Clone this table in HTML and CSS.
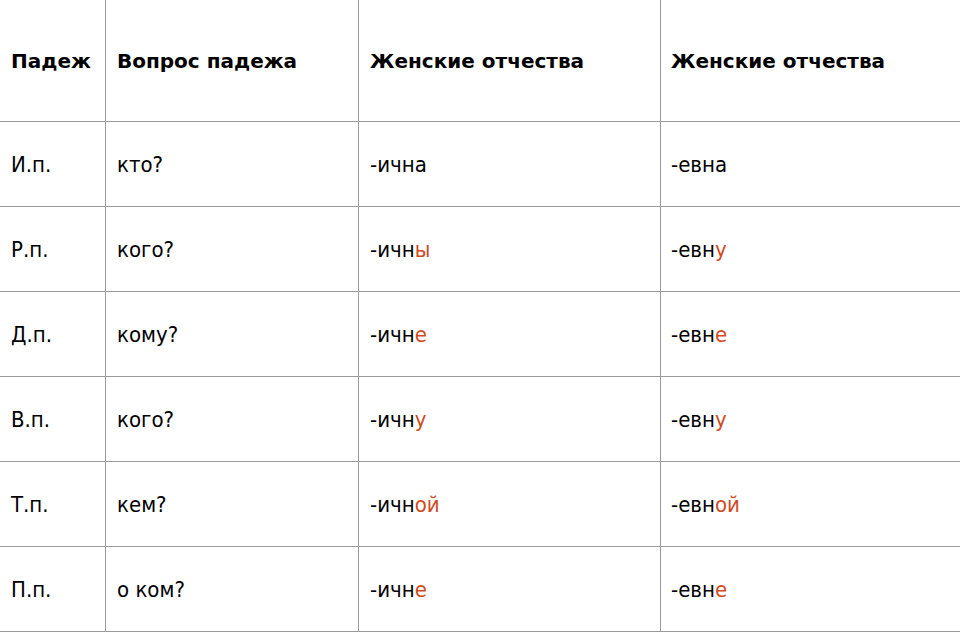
FILE: index.html
```html
<!DOCTYPE html>
<html lang="ru">
<head>
<meta charset="utf-8">
<title>Падежи отчеств</title>
<link rel="stylesheet" href="styles.css">
</head>
<body>
<table class="cases">
  <thead>
    <tr class="head-row">
      <th class="c1">Падеж</th>
      <th class="c2">Вопрос падежа</th>
      <th class="c3">Женские отчества</th>
      <th class="c4">Женские отчества</th>
    </tr>
  </thead>
  <tbody>
    <tr>
      <td class="c1">И.п.</td>
      <td class="c2">кто?</td>
      <td class="c3">-ична</td>
      <td class="c4">-евна</td>
    </tr>
    <tr>
      <td class="c1">Р.п.</td>
      <td class="c2">кого?</td>
      <td class="c3">-ичн<span class="end">ы</span></td>
      <td class="c4">-евн<span class="end">у</span></td>
    </tr>
    <tr>
      <td class="c1">Д.п.</td>
      <td class="c2">кому?</td>
      <td class="c3">-ичн<span class="end">е</span></td>
      <td class="c4">-евн<span class="end">е</span></td>
    </tr>
    <tr>
      <td class="c1">В.п.</td>
      <td class="c2">кого?</td>
      <td class="c3">-ичн<span class="end">у</span></td>
      <td class="c4">-евн<span class="end">у</span></td>
    </tr>
    <tr>
      <td class="c1">Т.п.</td>
      <td class="c2">кем?</td>
      <td class="c3">-ичн<span class="end">ой</span></td>
      <td class="c4">-евн<span class="end">ой</span></td>
    </tr>
    <tr>
      <td class="c1">П.п.</td>
      <td class="c2">о ком?</td>
      <td class="c3">-ичн<span class="end">е</span></td>
      <td class="c4">-евн<span class="end">е</span></td>
    </tr>
  </tbody>
</table>
</body>
</html>
```
FILE: styles.css
```css
html, body {
  margin: 0;
  padding: 0;
  background: #ffffff;
}

body {
  font-family: "DejaVu Sans", Verdana, sans-serif;
  color: #000000;
  width: 960px;
  height: 638px;
  overflow: hidden;
}

.cases {
  border-collapse: collapse;
  table-layout: fixed;
  width: 960px;
}

.cases th,
.cases td {
  text-align: left;
  vertical-align: middle;
  padding: 0 0 0 11px;
  border-right: 1px solid #9a9a9a;
  border-bottom: 1px solid #9a9a9a;
  white-space: nowrap;
}

.cases th {
  font-weight: bold;
  font-size: 20px;
  height: 121px;
}

.cases td {
  font-weight: normal;
  font-size: 22px;
  font-stretch: condensed;
  height: 84px;
}

.cases .c1 { width: 94px; }
.cases .c2 { width: 241px; }
.cases .c3 { width: 290px; }
.cases .c4 { width: 289px; border-right: none; padding-left: 10px; }

.end {
  color: #d04a22;
}
```
